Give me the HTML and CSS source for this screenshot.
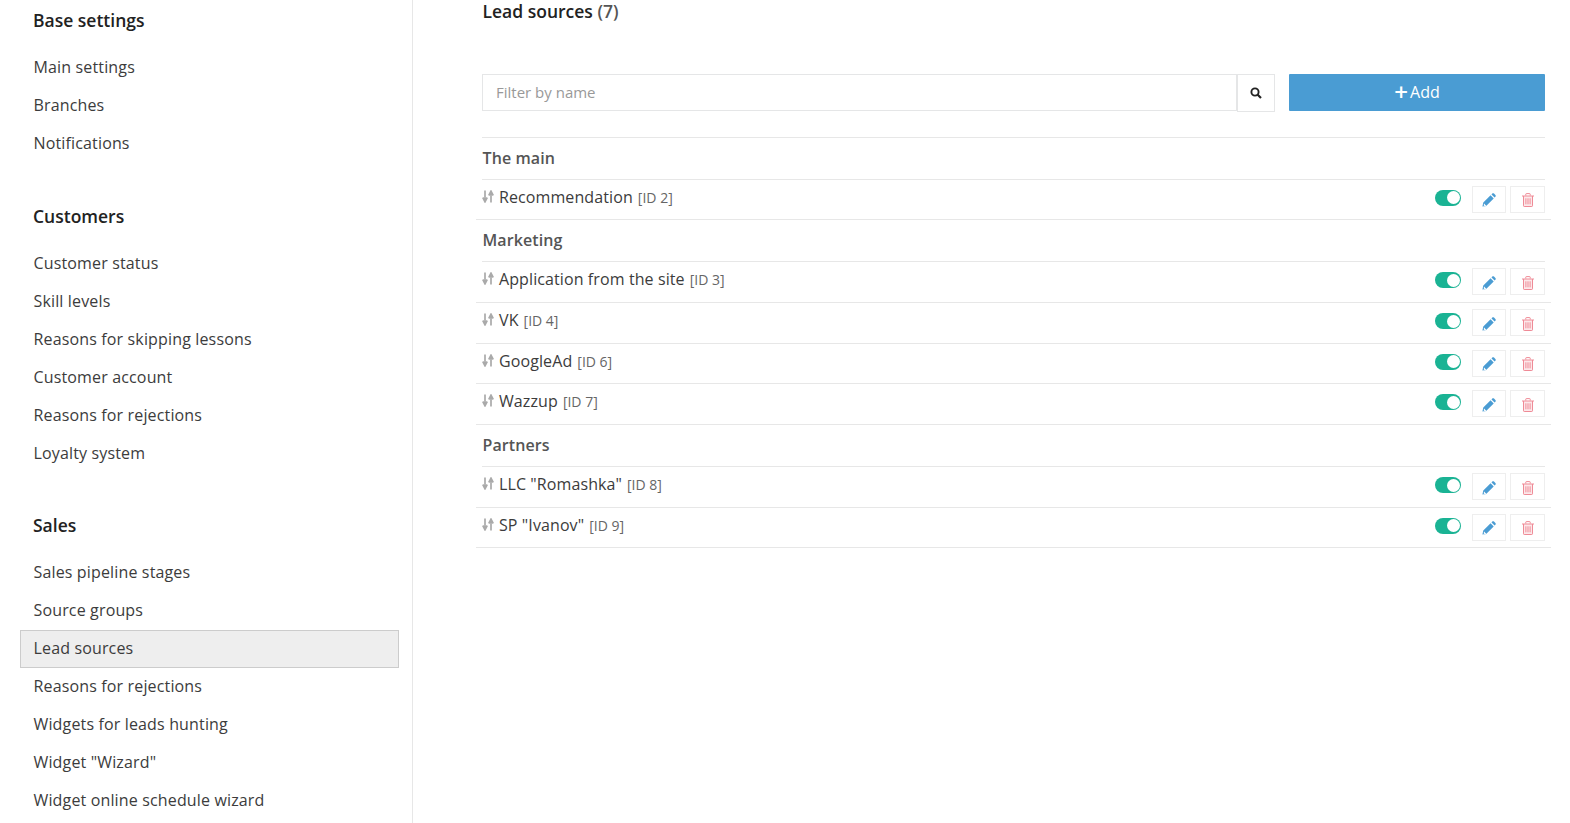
FILE: index.html
```html
<!DOCTYPE html>
<html lang="en">
<head>
  <meta charset="UTF-8">
  <title>Lead sources</title>
  <link rel="stylesheet" href="styles.css">
</head>
<body>
  <svg class="icon-defs" width="0" height="0">
    <symbol id="sort" viewBox="0 0 12 13">
      <path d="M3 .5v9.500M.8 7.500L3 11.800l2.200-4.300M9 12.500V3M6.800 5.500L9 1.200l2.200 4.300" fill="none" stroke="currentColor" stroke-width="1.700"/>
    </symbol>
    <symbol id="pencil" viewBox="0 0 14 14">
      <path d="M.4 13.600l.9-4 7.300-7.300 3.100 3.100-7.300 7.300zM2.100 10.600l-.4 1.700 1 1 1.700-.4z" fill="currentColor" fill-rule="evenodd"/>
      <path d="M9.500 1.400l.8-.8c.5-.5 1.200-.5 1.700 0l1.400 1.400c.5.5.5 1.200 0 1.700l-.8.8z" fill="currentColor"/>
    </symbol>
    <symbol id="trash" viewBox="0 0 12 14">
      <path d="M1.500 3h9v9.800c0 .4-.3.700-.7.700H2.200c-.4 0-.7-.3-.7-.7z" fill="currentColor" opacity=".2"/>
      <path d="M3.800 2.500V1.100c0-.3.200-.5.500-.5h3.400c.3 0 .5.200.5.500v1.400M0 3h12M1.500 3v9.800c0 .4.300.7.700.7h7.600c.4 0 .7-.3.700-.7V3M3.900 5.300v6M6 5.300v6M8.100 5.300v6" fill="none" stroke="currentColor" stroke-width="1"/>
    </symbol>
  </svg>

  <div class="layout">
    <aside class="sidebar">
      <h3>Base settings</h3>
      <ul>
        <li>Main settings</li>
        <li>Branches</li>
        <li>Notifications</li>
      </ul>
      <h3>Customers</h3>
      <ul>
        <li>Customer status</li>
        <li>Skill levels</li>
        <li>Reasons for skipping lessons</li>
        <li>Customer account</li>
        <li>Reasons for rejections</li>
        <li>Loyalty system</li>
      </ul>
      <h3 class="sales-title">Sales</h3>
      <ul class="sales-list">
        <li>Sales pipeline stages</li>
        <li>Source groups</li>
        <li class="active">Lead sources</li>
        <li>Reasons for rejections</li>
        <li>Widgets for leads hunting</li>
        <li>Widget "Wizard"</li>
        <li>Widget online schedule wizard</li>
      </ul>
    </aside>

    <main class="content">
      <h2 class="title">Lead sources <span>(7)</span></h2>

      <div class="toolbar">
        <div class="filter">
          <input type="text" placeholder="Filter by name">
          <button type="button" class="search-btn" aria-label="Search">
            <svg width="12" height="12" viewBox="0 0 12 12"><circle cx="5" cy="5" r="3.600" fill="none" stroke="currentColor" stroke-width="1.900"/><path d="M7.500 7.500l3.500 3.500" stroke="currentColor" stroke-width="2.200"/></svg>
          </button>
        </div>
        <button type="button" class="add-btn"><span class="plus">+</span>Add</button>
      </div>

      <div class="group-title first">The main</div>
      <div class="row">
        <svg class="sort"><use href="#sort"/></svg><span class="name">Recommendation</span><span class="id">[ID 2]</span>
        <span class="toggle"></span>
        <button type="button" class="icon-btn edit"><svg><use href="#pencil"/></svg></button>
        <button type="button" class="icon-btn del"><svg><use href="#trash"/></svg></button>
      </div>

      <div class="group-title">Marketing</div>
      <div class="row">
        <svg class="sort"><use href="#sort"/></svg><span class="name">Application from the site</span><span class="id">[ID 3]</span>
        <span class="toggle"></span>
        <button type="button" class="icon-btn edit"><svg><use href="#pencil"/></svg></button>
        <button type="button" class="icon-btn del"><svg><use href="#trash"/></svg></button>
      </div>
      <div class="row">
        <svg class="sort"><use href="#sort"/></svg><span class="name">VK</span><span class="id">[ID 4]</span>
        <span class="toggle"></span>
        <button type="button" class="icon-btn edit"><svg><use href="#pencil"/></svg></button>
        <button type="button" class="icon-btn del"><svg><use href="#trash"/></svg></button>
      </div>
      <div class="row">
        <svg class="sort"><use href="#sort"/></svg><span class="name">GoogleAd</span><span class="id">[ID 6]</span>
        <span class="toggle"></span>
        <button type="button" class="icon-btn edit"><svg><use href="#pencil"/></svg></button>
        <button type="button" class="icon-btn del"><svg><use href="#trash"/></svg></button>
      </div>
      <div class="row">
        <svg class="sort"><use href="#sort"/></svg><span class="name">Wazzup</span><span class="id">[ID 7]</span>
        <span class="toggle"></span>
        <button type="button" class="icon-btn edit"><svg><use href="#pencil"/></svg></button>
        <button type="button" class="icon-btn del"><svg><use href="#trash"/></svg></button>
      </div>

      <div class="group-title">Partners</div>
      <div class="row">
        <svg class="sort"><use href="#sort"/></svg><span class="name">LLC "Romashka"</span><span class="id">[ID 8]</span>
        <span class="toggle"></span>
        <button type="button" class="icon-btn edit"><svg><use href="#pencil"/></svg></button>
        <button type="button" class="icon-btn del"><svg><use href="#trash"/></svg></button>
      </div>
      <div class="row">
        <svg class="sort"><use href="#sort"/></svg><span class="name">SP "Ivanov"</span><span class="id">[ID 9]</span>
        <span class="toggle"></span>
        <button type="button" class="icon-btn edit"><svg><use href="#pencil"/></svg></button>
        <button type="button" class="icon-btn del"><svg><use href="#trash"/></svg></button>
      </div>
    </main>
  </div>
</body>
</html>
```

FILE: styles.css
```css
* {
  margin: 0;
  padding: 0;
  box-sizing: border-box;
}

body {
  height: 100vh;
  overflow: hidden;
  background: #fff;
  color: #333;
  font-family: 'Open Sans', sans-serif;
  font-size: 16px;
}

.icon-defs {
  position: absolute;
}

.layout {
  display: flex;
  height: 100vh;
}

.sidebar {
  width: 413px;
  flex-shrink: 0;
  padding: 7px 13px 0 20px;
  border-right: 1px solid #e7e7e7;
}

.sidebar h3 {
  height: 26px;
  padding-left: 13px;
  color: #222;
  font-size: 17.5px;
  font-weight: 600;
  line-height: 26px;
}

.sidebar h3.sales-title {
  line-height: 24px;
}

.sidebar ul {
  list-style: none;
  margin-top: 15px;
  margin-bottom: 41px;
}

.sidebar li {
  height: 38px;
  padding-left: 13.5px;
  color: #3c3c3c;
  letter-spacing: 0.15px;
  line-height: 38px;
}

.sidebar .sales-list li {
  line-height: 36px;
}

.sidebar .sales-list li.active {
  padding-left: 12.5px;
  background: #eee;
  border: 1px solid #ccc;
  line-height: 34px;
}

.content {
  flex: 1;
  padding: 0 25px 0 69px;
}

.title {
  height: 74px;
  padding-left: 0.5px;
  color: #222;
  font-size: 17.5px;
  font-weight: 600;
  line-height: 23px;
}

.title span {
  color: #555;
}

.toolbar {
  display: flex;
  gap: 14px;
  height: 37px;
  margin-bottom: 26px;
}

.filter {
  display: flex;
  flex: 1;
}

.filter input {
  flex: 1;
  min-width: 0;
  padding: 0 13px 2px;
  border: 1px solid #e5e6e7;
  color: #333;
  font-family: inherit;
  font-size: 15px;
}

.filter input::placeholder {
  color: #999;
}

.search-btn {
  flex-shrink: 0;
  display: flex;
  align-items: center;
  justify-content: center;
  width: 38px;
  height: 38px;
  background: #fff;
  border: 1px solid #e5e6e7;
  color: #222;
}

.add-btn {
  display: flex;
  align-items: center;
  justify-content: center;
  gap: 2px;
  width: 256px;
  padding-bottom: 1px;
  background: #4a9cd3;
  border: none;
  border-radius: 1px;
  color: #fff;
  font-family: inherit;
  font-size: 16px;
}

.plus {
  font-size: 24px;
  font-weight: 600;
  line-height: 1;
}

.group-title {
  height: 42px;
  padding-left: 0.5px;
  border-bottom: 1px solid #e7e7e7;
  color: #555;
  font-weight: 600;
  letter-spacing: 0.1px;
  line-height: 40px;
}

.group-title.first {
  border-top: 1px solid #e7e7e7;
  height: 42.55px;
}

.row {
  display: flex;
  align-items: flex-start;
  height: 40.7px;
  margin: 0 -6px;
  padding: 0 6px;
  border-bottom: 1px solid #e7e7e7;
  line-height: 35.4px;
}

.sort {
  width: 12px;
  height: 13px;
  margin-top: 10.2px;
  margin-right: 5px;
  color: #aaa;
}

.name {
  color: #3c3c3c;
  letter-spacing: 0.1px;
}

.id {
  margin-left: 5px;
  color: #666;
  font-size: 14px;
}

.toggle {
  position: relative;
  width: 26px;
  height: 16px;
  margin-top: 10.2px;
  margin-left: auto;
  margin-right: 11px;
  background: #1ab394;
  border-radius: 8px;
}

.toggle::after {
  content: "";
  position: absolute;
  top: 1.5px;
  right: 1.5px;
  width: 13px;
  height: 13px;
  background: #fff;
  border-radius: 50%;
}

.icon-btn {
  display: flex;
  align-items: center;
  justify-content: center;
  width: 34px;
  height: 27px;
  margin-top: 6.2px;
  padding-top: 2px;
  background: #fff;
  border: 1px solid #eee;
}

.icon-btn svg {
  width: 14px;
  height: 14px;
}

.edit {
  color: #4a9cd3;
}

.del {
  width: 35px;
  margin-left: 4px;
  color: #ef8a96;
}
```
